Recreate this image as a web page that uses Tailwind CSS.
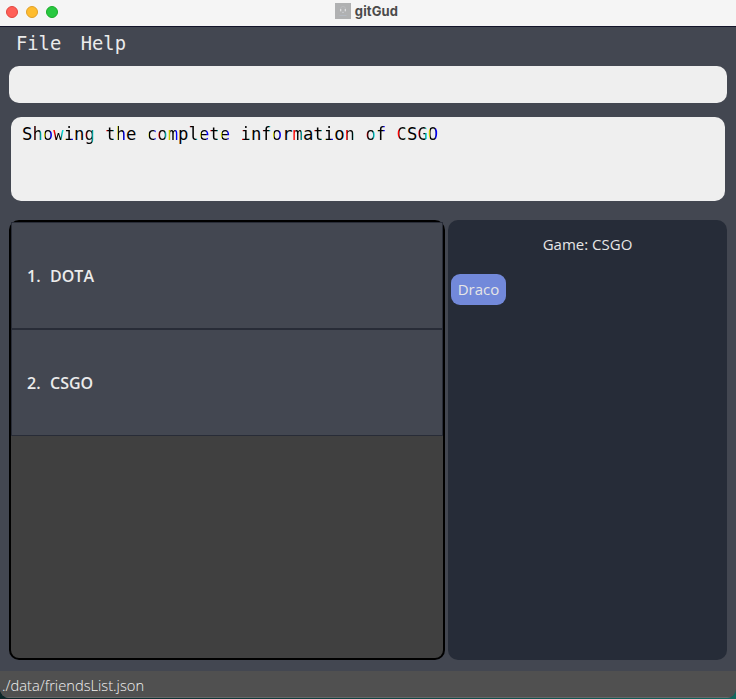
<!DOCTYPE html>
<html lang="en">
<head>
<meta charset="utf-8">
<title>gitGud</title>
<script src="https://cdn.jsdelivr.net/npm/@tailwindcss/browser@4"></script>
</head>
<body class="bg-[#0b3b3c] font-['Open_Sans','Noto_Sans',sans-serif] overflow-hidden">
<div class="w-[736px] h-[699px] bg-linear-to-r from-[#0c2629] to-[#12675f]">
<div class="flex flex-col h-[698px] rounded-b-[9px] overflow-hidden bg-[#434751]">
  <header class="relative h-[27px] shrink-0 bg-[#f5f5f5] border-b border-[#13142a] flex items-center justify-center">
    <div class="absolute left-[6px] top-[6px] flex gap-2">
      <span class="size-3 rounded-full bg-[#ff5f57] border border-[#e2463f]"></span>
      <span class="size-3 rounded-full bg-[#febc2e] border border-[#e0a028]"></span>
      <span class="size-3 rounded-full bg-[#28c840] border border-[#1aab29]"></span>
    </div>
    <div class="flex items-center gap-1 -mt-[4px] -ml-[3px]">
      <svg class="size-4" viewBox="0 0 16 16"><rect width="16" height="16" fill="#b0b1b2"/><path d="M5.5 7V6a2.5 2.5 0 0 1 5 0v1" fill="none" stroke="#bdbec0" stroke-width=".8"/><rect x="5" y="6" width="1.3" height="2.3" fill="#dcdddf"/><rect x="9.7" y="6" width="1.3" height="2.3" fill="#dcdddf"/><path d="M7 9.3h2" stroke="#d0d2d5" stroke-width=".8"/><path d="M4.5 12.5h7" stroke="#b5bbc5" stroke-width=".8"/></svg>
      <span class="font-[Inter,sans-serif] font-bold text-[13px] leading-4 tracking-[0.15px] text-[#4b4b4b]">gitGud</span>
    </div>
  </header>
  <nav class="h-[39px] shrink-0 pl-4 pt-[4px] flex gap-[19.5px] font-['DejaVu_Sans_Mono',monospace] text-[18.8px] leading-[26px] text-[#ebebeb]">
    <span>File</span><span>Help</span>
  </nav>
  <div class="h-[37px] shrink-0 mx-[9px] rounded-[10px] bg-[#efefef]"></div>
  <div class="h-[84px] shrink-0 mt-[14px] mx-[11px] rounded-[10px] bg-[#efefef] pl-[11px] pt-[5px] font-['DejaVu_Sans_Mono',monospace] text-[17.27px] leading-6 text-black whitespace-pre [&_i]:not-italic [&_i]:text-transparent [&_i]:bg-clip-text [&_i]:bg-[linear-gradient(90deg,#f00_1.9px,#000_2.8px,#000_7.4px,#00d8d8_9px)] [&_b]:font-normal [&_b]:text-transparent [&_b]:bg-clip-text [&_b]:bg-[linear-gradient(90deg,#dddd00_1.4px,#000_2.3px,#000_6.8px,#00f_7.8px)]">S<i>h</i><b>o</b><i>w</i><b>i</b>n<i>g</i> <i>t</i><b>h</b>e <b>c</b><i>o</i><b>m</b>p<i>l</i><b>e</b><i>t</i><b>e</b> <i>i</i>n<i>f</i><b>o</b>r<i>m</i>a<i>t</i><b>i</b>o<i>n</i> <i>o</i><b>f</b> <i>C</i>S<i>G</i><b>O</b></div>
  <main class="flex gap-[3px] mt-[19px] mx-[9px] h-[440px] shrink-0">
    <section class="w-[436px] rounded-[10px] bg-black p-[2px]">
      <div class="h-full rounded-b-[8px] bg-[#404040] text-[16px] font-semibold text-[#ebebeb]">
        <div class="h-[107px] border border-[#282c37] bg-[#434751] flex items-center gap-[9.5px] pl-[15px]"><span>1.</span><span>DOTA</span></div>
        <div class="h-[107px] border border-[#282c37] bg-[#434751] flex items-center gap-[9.5px] pl-[15px]"><span>2.</span><span>CSGO</span></div>
      </div>
    </section>
    <section class="flex-1 rounded-[10px] bg-[#262c38] pt-[13px] text-[#e6e6e6]">
      <div class="text-center text-[15px] leading-[22px]">Game: CSGO</div>
      <div class="mt-[19px] ml-[3px] w-[55px] h-[31px] pb-[2px] rounded-[9px] bg-[#7289da] flex items-center justify-center text-[15px] leading-[22px]">Draco</div>
    </section>
  </main>
  <footer class="mt-[11px] h-[27px] shrink-0 bg-[#505050] border-b border-[#686868] pl-[2px] text-[14.7px] leading-[29px] text-[#f0f0f0] font-light">./data/friendsList.json</footer>
</div>
</div>
</body>
</html>
